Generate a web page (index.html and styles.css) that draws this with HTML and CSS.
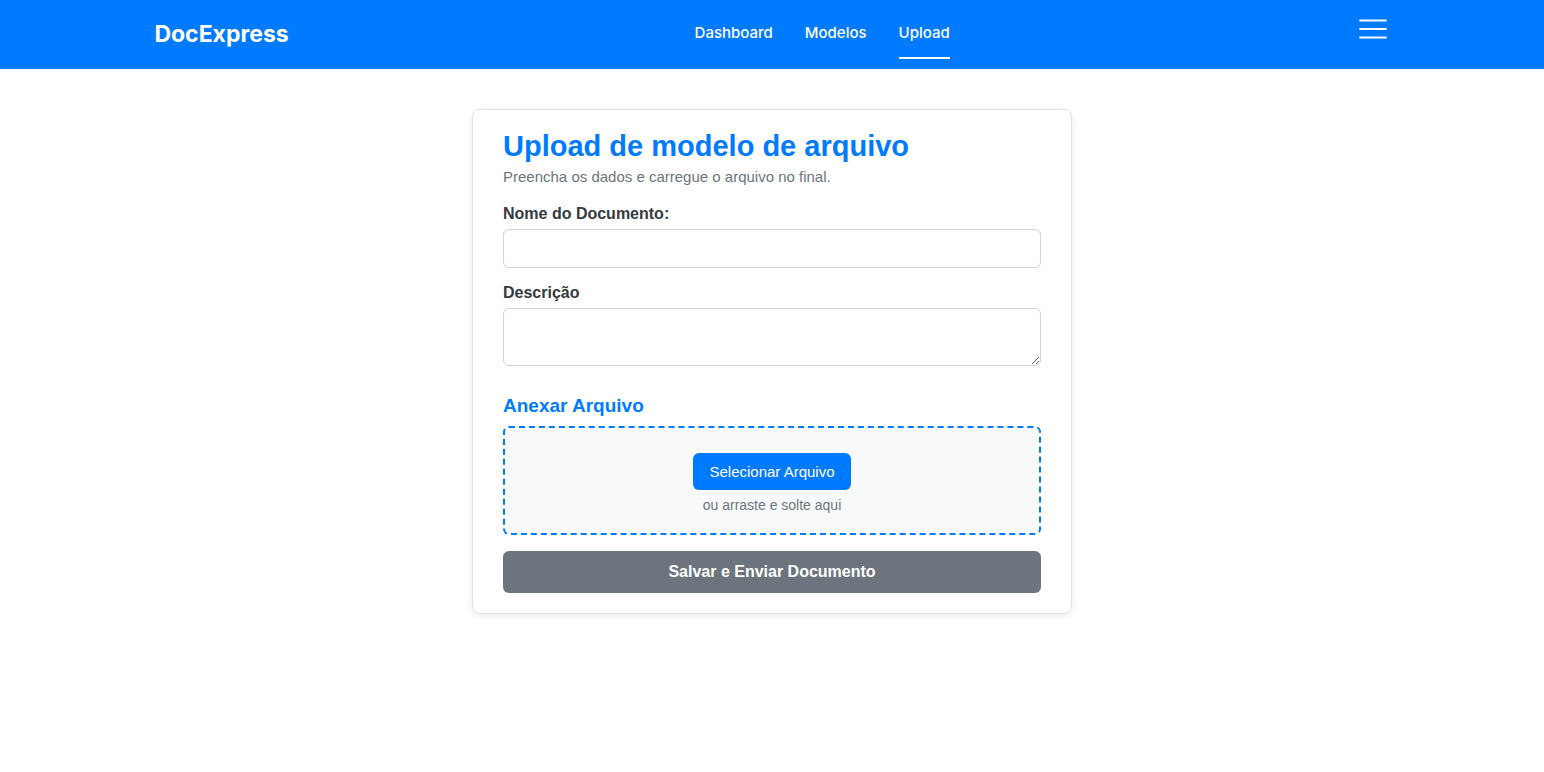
FILE: index.html
```html
<!DOCTYPE html>
<html lang="pt-BR">
<head>
<meta charset="utf-8">
<meta name="viewport" content="width=device-width, initial-scale=1">
<title>DocExpress</title>
<link rel="stylesheet" href="styles.css">
</head>
<body>
<header class="header">
  <a class="brand" href="#">DocExpress</a>
  <nav class="nav">
    <a class="nav-link" href="#">Dashboard</a>
    <a class="nav-link" href="#">Modelos</a>
    <a class="nav-link active" href="#">Upload</a>
  </nav>
  <button class="menu" type="button" aria-label="Menu">
    <svg width="28" height="20" viewBox="0 0 28 20" stroke="#fff" stroke-width="2" aria-hidden="true"><path d="M0.3 1.5H27.7M0.3 10H27.7M0.3 18.5H27.7"/></svg>
  </button>
</header>
<main class="main">
  <form class="card">
    <h1 class="title">Upload de modelo de arquivo</h1>
    <p class="subtitle">Preencha os dados e carregue o arquivo no final.</p>
    <label class="label" for="nome">Nome do Documento:</label>
    <input class="field" id="nome" type="text">
    <label class="label" for="descricao">Descrição</label>
    <textarea class="field area" id="descricao"></textarea>
    <h2 class="section">Anexar Arquivo</h2>
    <div class="drop">
      <button class="select" type="button">Selecionar Arquivo</button>
      <p class="hint">ou arraste e solte aqui</p>
    </div>
    <button class="submit" type="submit">Salvar e Enviar Documento</button>
  </form>
</main>
</body>
</html>
```
FILE: styles.css
```css
* {
  box-sizing: border-box;
}

body {
  margin: 0;
  background: #fff;
  color: #343a40;
  font-family: "Liberation Sans", Arial, sans-serif;
}

.header {
  display: flex;
  justify-content: space-between;
  align-items: flex-start;
  padding: 0 10%;
  min-height: 69px;
  background: #007bff;
  font-family: Inter, sans-serif;
}

.brand {
  padding-top: 19px;
  color: #fff;
  font-size: 23px;
  font-weight: 700;
  line-height: 30px;
  text-decoration: none;
}

.nav {
  display: flex;
  gap: 32px;
  padding-top: 22px;
}

.nav-link {
  padding-bottom: 13px;
  border-bottom: 2px solid transparent;
  color: #fff;
  font-size: 15px;
  font-weight: 500;
  line-height: 22px;
  text-decoration: none;
}

.nav-link.active {
  border-color: #fff;
}

.menu {
  margin-top: 19px;
  padding: 0 3px;
  border: 0;
  background: none;
}

.menu svg {
  display: block;
}

.main {
  padding: 40px 16px;
}

.card {
  display: flex;
  flex-direction: column;
  max-width: 600px;
  margin: 0 auto;
  padding: 20px 30px;
  border: 1px solid #dee2e6;
  border-radius: 8px;
  background: #fff;
  box-shadow: 0 2px 8px rgba(0, 0, 0, 0.08);
}

.title {
  margin: 0;
  color: #007bff;
  font-size: 29px;
  line-height: 32px;
}

.subtitle {
  margin: 5px 0 17px;
  color: #6c757d;
  font-size: 15px;
  line-height: 20px;
}

.label {
  margin-bottom: 5px;
  font-size: 16px;
  font-weight: 700;
  line-height: 20px;
}

.field {
  width: 100%;
  height: 39px;
  margin: 0 0 15px;
  padding: 8px;
  border: 1px solid #ced4da;
  border-radius: 6px;
  background: #fff;
  font: inherit;
}

.area {
  height: 58px;
  margin-bottom: 28px;
}

.section {
  margin: 0 0 8px;
  color: #007bff;
  font-size: 19px;
  line-height: 24px;
}

.drop {
  display: flex;
  flex-direction: column;
  align-items: center;
  gap: 5px;
  margin-bottom: 16px;
  padding: 25px 20px 18px;
  border: 2px dashed #007bff;
  border-radius: 6px;
  background: #f8f9fa;
}

.select {
  height: 37px;
  padding: 0 16px;
  border: 0;
  border-radius: 6px;
  background: #007bff;
  color: #fff;
  font: 15px "Liberation Sans", Arial, sans-serif;
}

.hint {
  margin: 0;
  color: #6c757d;
  font-size: 14px;
  line-height: 20px;
}

.submit {
  height: 42px;
  border: 0;
  border-radius: 6px;
  background: #6c757d;
  color: #fff;
  font: 700 16px "Liberation Sans", Arial, sans-serif;
}
```
